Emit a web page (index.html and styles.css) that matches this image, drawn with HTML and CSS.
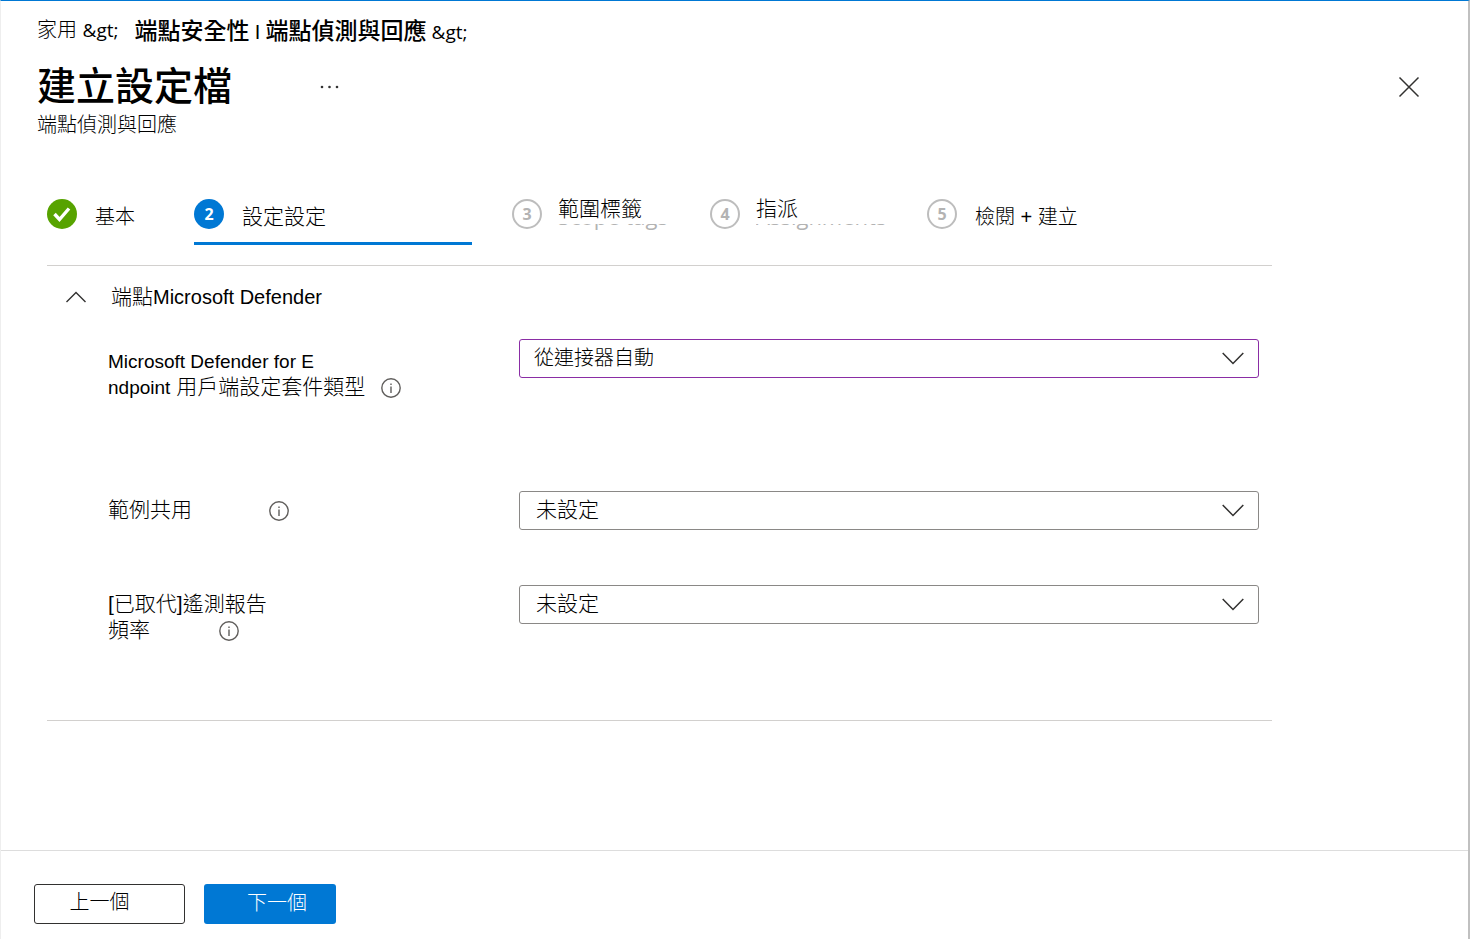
FILE: index.html
```html
<!DOCTYPE html>
<html lang="zh-Hant">
<head>
<meta charset="utf-8">
<title>建立設定檔</title>
<link rel="stylesheet" href="styles.css">
</head>
<body>
<div class="blade">
  <header class="header">
    <nav class="breadcrumb" aria-label="階層連結">
      <a class="crumb" href="#">家用 <span class="entity">&amp;gt;</span></a>
      <a class="crumb crumb-strong" href="#">端點安全性 <span class="bar">I</span> 端點偵測與回應 <span class="entity">&amp;gt;</span></a>
    </nav>
    <div class="title-row">
      <h1 class="title">建立設定檔</h1>
      <button class="icon-button more" type="button" aria-label="更多">
        <svg width="22" height="6" viewBox="0 0 22 6"><g fill="#333"><circle cx="3" cy="3" r="1.3"/><circle cx="10.500" cy="3" r="1.3"/><circle cx="18" cy="3" r="1.3"/></g></svg>
      </button>
      <button class="icon-button close" type="button" aria-label="關閉">
        <svg width="22" height="22" viewBox="0 0 22 22"><path d="M1.5 1.5l19 19M20.5 1.5l-19 19" stroke="#323130" stroke-width="1.5" fill="none"/></svg>
      </button>
    </div>
    <p class="subtitle">端點偵測與回應</p>
  </header>

  <main class="main">
    <ol class="steps">
      <li class="step">
        <span class="badge badge-done"><svg width="20" height="18" viewBox="0 0 20 18"><path d="M2.5 9l5 5.500L17 3.500" stroke="#fff" stroke-width="3.4" fill="none"/></svg></span>
        <span class="step-label">基本</span>
      </li>
      <li class="step step-active" aria-current="step">
        <span class="badge badge-current">2</span>
        <span class="step-label">設定設定</span>
      </li>
      <li class="step">
        <span class="badge">3</span>
        <span class="step-stack"><span class="step-top">範圍標籤</span><span class="remnant">Scope tags</span></span>
      </li>
      <li class="step">
        <span class="badge">4</span>
        <span class="step-stack"><span class="step-top">指派</span><span class="remnant">Assignments</span></span>
      </li>
      <li class="step">
        <span class="badge">5</span>
        <span class="step-label">檢閱 + 建立</span>
      </li>
    </ol>

    <section class="section">
      <h2 class="section-head">
        <button class="section-toggle" type="button" aria-expanded="true">
          <svg width="20" height="12" viewBox="0 0 20 12"><path d="M.5 11L10 1.5l9.500 9.500" stroke="#323130" stroke-width="1.4" fill="none"/></svg>
          <span class="section-title">端點<span class="product">Microsoft Defender</span></span>
        </button>
      </h2>

      <div class="field field-package">
        <div class="field-label">
          <label for="package"><span class="latin">Microsoft Defender for E<br>ndpoint</span> 用戶端設定套件類型</label>
          <svg class="info" width="20" height="20" viewBox="0 0 20 20"><circle cx="10" cy="10" r="9.200" stroke="#605e5c" stroke-width="1.4" fill="none"/><path d="M10 8.500v6.500M10 5.500v1.500" stroke="#605e5c" stroke-width="1.4"/></svg>
        </div>
        <div class="select-box">
          <select class="select select-edited" id="package"><option>從連接器自動</option></select>
          <svg class="chevron" width="22" height="13" viewBox="0 0 22 13"><path d="M.7 1L11 11.500 21.300 1" stroke="#323130" stroke-width="1.5" fill="none"/></svg>
        </div>
      </div>

      <div class="field field-sample">
        <div class="field-label field-label-wide">
          <label for="sample">範例共用</label>
          <svg class="info" width="20" height="20" viewBox="0 0 20 20"><circle cx="10" cy="10" r="9.200" stroke="#605e5c" stroke-width="1.4" fill="none"/><path d="M10 8.500v6.500M10 5.500v1.500" stroke="#605e5c" stroke-width="1.4"/></svg>
        </div>
        <div class="select-box">
          <select class="select" id="sample"><option>未設定</option></select>
          <svg class="chevron" width="22" height="13" viewBox="0 0 22 13"><path d="M.7 1L11 11.500 21.300 1" stroke="#323130" stroke-width="1.5" fill="none"/></svg>
        </div>
      </div>

      <div class="field field-telemetry">
        <div class="field-label field-label-broken">
          <label for="telemetry">[已取代]遙測報告<br>頻率</label>
          <svg class="info" width="20" height="20" viewBox="0 0 20 20"><circle cx="10" cy="10" r="9.200" stroke="#605e5c" stroke-width="1.4" fill="none"/><path d="M10 8.500v6.500M10 5.500v1.500" stroke="#605e5c" stroke-width="1.4"/></svg>
        </div>
        <div class="select-box">
          <select class="select" id="telemetry"><option>未設定</option></select>
          <svg class="chevron" width="22" height="13" viewBox="0 0 22 13"><path d="M.7 1L11 11.500 21.300 1" stroke="#323130" stroke-width="1.5" fill="none"/></svg>
        </div>
      </div>
    </section>
  </main>

  <footer class="footer">
    <button class="button button-previous" type="button">上一個</button>
    <button class="button button-next" type="button">下一個</button>
  </footer>
</div>
</body>
</html>
```

FILE: styles.css
```css
* { box-sizing: border-box; }

body {
  margin: 0;
  background: #fff;
  color: #000;
  font: 300 20px/26px "Liberation Sans", "Noto Sans CJK TC Light", "Noto Sans CJK TC", sans-serif;
}

button, select { font: inherit; color: inherit; }

.blade {
  display: flex;
  flex-direction: column;
  min-height: 100vh;
  border-top: 1px solid #0078d4;
  border-right: 2px solid #c0c0c0;
  border-left: 1px solid #eee;
}

.header { padding: 14px 48px 0 36px; }

.breadcrumb {
  display: flex;
  align-items: center;
  gap: 16px;
  height: 30px;
}

.crumb { color: #000; text-decoration: none; }
.crumb-strong { font-size: 23px; font-weight: 500; font-family: "Noto Sans CJK TC Medium", "Noto Sans CJK TC", sans-serif; }
.entity { font: 400 19px "Open Sans", sans-serif; }
.bar { font: 400 20px "Liberation Sans", sans-serif; }

.title-row {
  display: flex;
  align-items: center;
  height: 48px;
  margin-top: 18px;
}

.title {
  margin: 0;
  padding-bottom: 8px;
  font: 500 39px/48px "Noto Sans CJK TC Medium", "Noto Sans CJK TC", sans-serif;
}

.icon-button {
  display: flex;
  padding: 0;
  border: 0;
  background: none;
}

.more { margin-left: 87px; }
.close { margin-left: auto; }
.subtitle { margin: 1px 0 0; }

.main {
  max-width: 1225px;
  margin: 59px 196px 0 46px;
}

.steps {
  display: grid;
  grid-template-columns: 147px 318px 198px 217px 1fr;
  margin: 0;
  padding: 0 0 20px;
  border-bottom: 1px solid #d2d0ce;
  list-style: none;
}

.step {
  display: flex;
  gap: 18px;
  height: 48px;
}

.step-active {
  margin-right: 40px;
  border-bottom: 3px solid #0078d4;
}

.badge {
  display: flex;
  flex: none;
  align-items: center;
  justify-content: center;
  width: 30px;
  height: 30px;
  margin-top: 2px;
  border: 2px solid #bdbdbd;
  border-radius: 50%;
  color: #b3b3b3;
  font: 700 16px/20px "Open Sans", sans-serif;
}

.badge-done { border: 0; background: #57a300; }
.badge-current { border: 0; background: #0078d4; color: #fff; }
.step-label { padding-top: 7px; }
.step-active .step-label, .step-stack { font-size: 21px; }
.step-stack { display: flex; flex-direction: column; margin-left: -2px; }
.step-top { height: 27px; line-height: 24px; }

.remnant {
  display: flex;
  align-items: flex-end;
  height: 7px;
  overflow: hidden;
  color: #b3b3b3;
  font: 400 22px/30px "Open Sans", sans-serif;
}

.section {
  padding: 0 13px 77px 61px;
  border-bottom: 1px solid #d2d0ce;
}

.section-head { margin: 0 0 0 -42px; padding-top: 18px; font: inherit; }

.section-toggle {
  display: flex;
  align-items: center;
  gap: 25px;
  padding: 0;
  border: 0;
  background: none;
}

.section-title { font-size: 21px; }
.product { font-size: 20px; }

.field {
  display: grid;
  grid-template-columns: 411px 1fr;
  align-items: start;
}

.field-package { margin-top: 29px; }
.field-sample { margin-top: 91px; }
.field-telemetry { margin-top: 55px; }

.field-label {
  display: flex;
  align-items: flex-end;
  gap: 16px;
  padding-top: 6px;
  font-size: 21px;
}

.latin { font-size: 19px; }
.field-package .field-label { padding-top: 9px; line-height: 25px; }
.field-label-wide { gap: 77px; }
.field-label-broken { gap: 0; }
.field-label-broken label { margin-right: -48px; }
.info { flex: none; margin-bottom: 2px; }
.select-box { position: relative; }

.select {
  display: block;
  width: 100%;
  height: 39px;
  padding: 0 48px 2px 16px;
  border: 1px solid #8a8886;
  border-radius: 3px;
  appearance: none;
  background: #fff;
  font-size: 21px;
}

.select-edited { padding-left: 14px; border-color: #8a2da5; font-size: 20px; }

.chevron {
  position: absolute;
  top: 13px;
  right: 15px;
  pointer-events: none;
}

.footer {
  display: flex;
  gap: 19px;
  margin-top: auto;
  padding: 33px 33px 15px;
  border-top: 1px solid #ddd;
}

.button {
  height: 40px;
  padding: 0 0 4px;
  border: 1px solid #323130;
  border-radius: 3px;
  background: #fff;
}

.button-previous { width: 151px; padding-right: 20px; }
.button-next { width: 132px; padding: 0 0 2px 14px; border: 0; background: #0078d4; color: #fff; }
```
